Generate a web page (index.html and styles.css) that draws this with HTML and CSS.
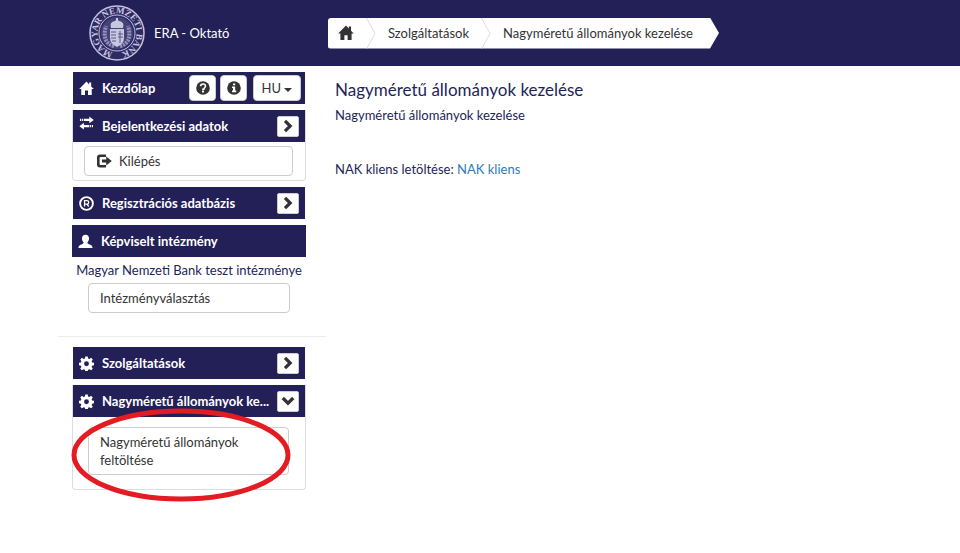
FILE: index.html
```html
<!DOCTYPE html>
<html lang="hu">
<head>
    <meta charset="UTF-8">
    <meta name="viewport" content="width=device-width, initial-scale=1.0">
    <title>ERA - Oktató</title>
    <link rel="stylesheet" href="styles.css">
</head>
<body>
    <!-- ikonok -->
    <svg class="icon-defs" aria-hidden="true">
        <symbol id="icon-home" viewBox="0 0 16 16">
            <path d="M8 0.6 0.2 8.6h2.2V15h4v-4.8h3.2V15h4V8.6h2.2L13 5.8V1.6h-2.2v2z"/>
        </symbol>
        <symbol id="icon-question" viewBox="0 0 14 14">
            <circle cx="7" cy="7" r="6.8"/>
            <path d="M4.6 5.3C4.6 3.8 5.6 3 7 3s2.5.9 2.5 2.1c0 1.5-1.7 1.7-1.7 3.1H6.1" fill="none" stroke="#fff" stroke-width="1.6"/>
            <path d="M6 9.6h2v1.8H6z" fill="#fff"/>
        </symbol>
        <symbol id="icon-info" viewBox="0 0 14 14">
            <circle cx="7" cy="7" r="6.8"/>
            <path d="M6 2.4h2.2v1.8H6zM5 5.4h3.2v4.2h1v1.6H5V9.6h1V7H5z" fill="#fff"/>
        </symbol>
        <symbol id="icon-transfer" viewBox="0 0 16 16">
            <path d="M5 3h6V.6l4.8 3.6L11 7.8V5.4H5zM3 3h1.2v2.4H3zM1 3h1.2v2.4H1zM11 9.6H5.2V7.2L.4 10.8l4.8 3.6V12H11zM11.8 9.6H13V12h-1.2zM13.8 9.6H15V12h-1.2z"/>
        </symbol>
        <symbol id="icon-logout" viewBox="0 0 16 16">
            <path d="M10 1.5H4Q1 1.5 1 4.5v7q0 3 3 3h6V12H4.400q-.8 0-.8-.8V4.800q0-.8.8-.8H10z"/>
            <path d="M6 6.600h4.200V3.500L15.800 8l-5.600 4.500V9.400H6z"/>
        </symbol>
        <symbol id="icon-registered" viewBox="0 0 16 16">
            <circle cx="8" cy="8" r="6.8" fill="none" stroke="currentColor" stroke-width="2"/>
            <path d="M5.900 11.200V5h2.500q2 0 2 1.800T8.400 8.600H5.900M8.400 8.600l2 2.600" fill="none" stroke="currentColor" stroke-width="1.4"/>
        </symbol>
        <symbol id="icon-user" viewBox="0 0 16 16">
            <path d="M8 .8c2.400 0 3.800 1.700 3.800 4.100 0 1.600-.7 3.100-1.700 4 0 1.300.4 1.500 1.600 2 2.400.9 3.700 1.500 3.900 3.900H.4c.2-2.400 1.500-3 3.900-3.900 1.200-.5 1.600-.7 1.600-2-1-.9-1.700-2.400-1.700-4C4.200 2.500 5.600.8 8 .8z"/>
        </symbol>
        <symbol id="icon-cog" viewBox="0 0 16 16">
            <path fill-rule="evenodd" d="M6.700.4h2.600l.4 2.200 1.300.5 1.900-1.200 1.800 1.800-1.200 1.900.5 1.300 2 .4v2.600l-2 .4-.5 1.300 1.200 1.900-1.800 1.800-1.900-1.200-1.300.5-.4 2H6.700l-.4-2-1.300-.5-1.900 1.200-1.800-1.800 1.200-1.900-.5-1.300-2-.4V7.300l2-.4.5-1.300-1.200-1.900 1.800-1.800L5 3.100l1.300-.5zM8 5.700a2.600 2.600 0 1 0 0 5.200 2.600 2.600 0 0 0 0-5.200z"/>
        </symbol>
        <symbol id="icon-right" viewBox="0 0 14 14">
            <path d="M4 1.8 9.2 7 4 12.200" fill="none" stroke="currentColor" stroke-width="3.2"/>
        </symbol>
        <symbol id="icon-down" viewBox="0 0 14 14">
            <path d="M1.800 4 7 9.200 12.200 4" fill="none" stroke="currentColor" stroke-width="3.2"/>
        </symbol>
    </svg>

    <header class="header">
        <div class="brand">
            <svg class="logo" viewBox="0 0 56 56" role="img" aria-label="Magyar Nemzeti Bank">
                <defs>
                    <path id="logoRing" d="M28 47.500a19.500 19.500 0 1 1 .1 0"/>
                </defs>
                <circle cx="28" cy="28" r="27" class="logo-disc"/>
                <circle cx="28" cy="28" r="18" class="logo-line"/>
                <circle cx="28" cy="28" r="16" class="logo-inner"/>
                <text class="logo-text"><textPath href="#logoRing" startOffset="50%">MAGYAR NEMZETI BANK</textPath></text>
                <!-- koszorú -->
                <path d="M25 41C16 39 14 31 17 21M31 41c9-2 11-10 8-20" class="logo-wreath"/>
                <!-- címer -->
                <path d="M21 24h14v9q0 6-7 9-7-3-7-9z" class="logo-shield"/>
                <path d="M22 27h5M22 30h5M22 33h5M23 36h4M31 26v12M29 29h5M29 32h5" class="logo-stripes"/>
                <path d="M22 23q-2-6 4-7l1-1v-2h2v2l1 1q6 1 4 7z" class="logo-crown"/>
            </svg>
            <span class="brand-name">ERA - Oktató</span>
        </div>
        <nav class="breadcrumb" aria-label="Navigáció">
            <a href="#" class="crumb crumb-home" aria-label="Kezdőlap"><svg class="icon"><use href="#icon-home"/></svg></a>
            <svg class="crumb-sep" viewBox="0 0 10 31"><path d="M.5 0 9 15.500.5 31"/></svg>
            <a href="#" class="crumb">Szolgáltatások</a>
            <svg class="crumb-sep" viewBox="0 0 10 31"><path d="M.5 0 9 15.500.5 31"/></svg>
            <a href="#" class="crumb crumb-last">Nagyméretű állományok kezelése</a>
        </nav>
    </header>

    <div class="container">
        <aside class="sidebar">
            <div class="panel">
                <div class="panel-heading">
                    <svg class="icon"><use href="#icon-home"/></svg>
                    <a href="#" class="panel-title">Kezdőlap</a>
                    <div class="tools">
                        <button class="btn btn-icon" aria-label="Súgó"><svg class="icon"><use href="#icon-question"/></svg></button>
                        <button class="btn btn-icon" aria-label="Információ"><svg class="icon"><use href="#icon-info"/></svg></button>
                        <button class="btn btn-lang">HU <span class="caret"></span></button>
                    </div>
                </div>
            </div>

            <div class="panel panel-bordered">
                <div class="panel-heading">
                    <svg class="icon icon-top"><use href="#icon-transfer"/></svg>
                    <a href="#" class="panel-title">Bejelentkezési adatok</a>
                    <button class="btn btn-toggle" aria-label="Megnyitás"><svg class="icon"><use href="#icon-right"/></svg></button>
                </div>
                <div class="panel-body panel-login">
                    <button class="btn btn-block"><svg class="icon"><use href="#icon-logout"/></svg>Kilépés</button>
                </div>
            </div>

            <div class="panel">
                <div class="panel-heading">
                    <svg class="icon"><use href="#icon-registered"/></svg>
                    <a href="#" class="panel-title">Regisztrációs adatbázis</a>
                    <button class="btn btn-toggle" aria-label="Megnyitás"><svg class="icon"><use href="#icon-right"/></svg></button>
                </div>
            </div>

            <div class="panel institution">
                <div class="panel-heading">
                    <svg class="icon"><use href="#icon-user"/></svg>
                    <span class="panel-title">Képviselt intézmény</span>
                </div>
                <p class="institution-name">Magyar Nemzeti Bank teszt intézménye</p>
                <button class="btn btn-block">Intézményválasztás</button>
            </div>

            <hr class="divider">

            <div class="panel">
                <div class="panel-heading">
                    <svg class="icon"><use href="#icon-cog"/></svg>
                    <a href="#" class="panel-title">Szolgáltatások</a>
                    <button class="btn btn-toggle" aria-label="Megnyitás"><svg class="icon"><use href="#icon-right"/></svg></button>
                </div>
            </div>

            <div class="panel panel-bordered">
                <div class="panel-heading">
                    <svg class="icon"><use href="#icon-cog"/></svg>
                    <a href="#" class="panel-title">Nagyméretű állományok ke...</a>
                    <button class="btn btn-toggle" aria-label="Bezárás"><svg class="icon"><use href="#icon-down"/></svg></button>
                </div>
                <div class="panel-body panel-files">
                    <button class="btn btn-block">Nagyméretű állományok feltöltése</button>
                    <svg class="marker" viewBox="0 0 220 94" aria-hidden="true"><ellipse cx="110" cy="47" rx="107" ry="44"/></svg>
                </div>
            </div>
        </aside>

        <main class="content">
            <h1>Nagyméretű állományok kezelése</h1>
            <p>Nagyméretű állományok kezelése</p>
            <p class="download">NAK kliens letöltése: <a href="#">NAK kliens</a></p>
        </main>
    </div>
</body>
</html>
```
FILE: styles.css
```css
* {
    box-sizing: border-box;
    margin: 0;
    padding: 0;
}

body {
    min-height: 100vh;
    font-family: "Trebuchet MS", Lato, "Open Sans", sans-serif;
    font-size: 13px;
    line-height: 18px;
    color: #231f57;
    background-color: #fff;
}

a {
    color: #337ab7;
    text-decoration: none;
}

.icon-defs {
    display: none;
}

.icon {
    width: 14px;
    height: 14px;
    flex: none;
    fill: currentColor;
}

/* fejléc */
.header {
    display: flex;
    align-items: center;
    height: 66px;
    background-color: #231f57;
}

.brand {
    display: flex;
    align-items: center;
    width: 328px;
    padding-left: 89px;
    color: #fff;
}

.logo {
    width: 56px;
    height: 56px;
    margin-right: 9px;
}

.logo-disc {
    fill: #2e2a63;
    stroke: #c3c1dc;
    stroke-width: 1.5;
}

.logo-line {
    fill: none;
    stroke: #c3c1dc;
    stroke-width: 1;
}

.logo-inner {
    fill: #45427a;
}

.logo-text {
    font-family: "Liberation Serif", serif;
    font-size: 9px;
    font-weight: bold;
    fill: #c9c7e0;
    text-anchor: middle;
}

.logo-wreath {
    fill: none;
    stroke: #9492bb;
    stroke-width: 4;
    stroke-dasharray: 2 1;
}

.logo-shield,
.logo-crown {
    fill: #c9c7e0;
}

.logo-stripes {
    fill: none;
    stroke: #5a5790;
    stroke-width: 1;
}

.breadcrumb {
    display: flex;
    height: 31px;
    background-color: #fff;
    border-radius: 3px 0 0 3px;
    clip-path: polygon(0 0, calc(100% - 9px) 0, 100% 50%, calc(100% - 9px) 100%, 0 100%);
}

.crumb {
    display: flex;
    align-items: center;
    padding: 0 12px;
    color: #333;
}

.crumb-home {
    padding: 0 12px 0 10px;
}

.crumb-home .icon {
    width: 16px;
    height: 16px;
}

.crumb-last {
    padding-right: 26px;
}

.crumb-sep {
    width: 10px;
    height: 31px;
    flex: none;
    fill: none;
    stroke: #ddd;
}

/* oldalsáv */
.container {
    display: grid;
    grid-template-columns: 268px 1fr;
    padding-left: 58px;
}

.sidebar {
    padding: 6px 0 20px;
}

.panel {
    margin: 0 20px 6px 14px;
    border: 0 solid transparent;
    border-width: 0 1px;
}

.panel-bordered {
    border-width: 0 1px 1px;
    border-color: #ddd;
    border-radius: 0 0 4px 4px;
}

.panel-heading {
    display: flex;
    align-items: center;
    height: 32px;
    padding: 0 6px;
    background-color: #231f57;
    color: #fff;
}

.panel-heading > .icon {
    width: 15px;
    height: 15px;
}

.panel-title {
    flex: 1;
    min-width: 0;
    margin: 0 4px 0 8px;
    overflow: hidden;
    text-overflow: ellipsis;
    white-space: nowrap;
    font-weight: bold;
    color: #fff;
}

.icon-top {
    align-self: flex-start;
    margin-top: 6px;
}

.tools {
    display: flex;
    gap: 4px;
}

.btn {
    font: inherit;
    color: #333;
    background-color: #fff;
    border: 1px solid #ccc;
    border-radius: 4px;
    cursor: pointer;
}

.btn-icon,
.btn-toggle {
    display: flex;
    align-items: center;
    justify-content: center;
    flex: none;
}

.btn-icon {
    width: 27px;
    height: 26px;
}

.btn-toggle {
    width: 22px;
    height: 21px;
    border-radius: 2px;
}

.btn-lang {
    width: 48px;
    height: 26px;
    margin: 0 -2px 0 2px;
}

.caret {
    display: inline-block;
    vertical-align: middle;
    border-top: 4px solid #333;
    border-left: 4px solid transparent;
    border-right: 4px solid transparent;
}

.btn-block {
    display: flex;
    align-items: center;
    width: 100%;
    min-height: 30px;
    padding: 5px 11px;
    text-align: left;
}

.btn-block .icon {
    width: 16px;
    height: 16px;
    margin-right: 7px;
}

.panel-login {
    padding: 4px 12px 4px 11px;
}

.panel-files {
    position: relative;
    padding: 10px 16px 14px 15px;
}

.panel-files .btn-block {
    min-height: 48px;
    padding-right: 30px;
}

.institution {
    border-width: 0;
}

.institution-name {
    padding: 4px 0;
    text-align: center;
}

.institution .btn-block {
    width: auto;
    min-width: 202px;
    margin: 0 16px;
}

.divider {
    margin: 23px 0 10px;
    border: 0;
    border-top: 1px solid #eee;
}

/* kiemelés a feltöltés gomb körül */
.marker {
    position: absolute;
    top: -9px;
    left: -2px;
    width: 220px;
    height: 94px;
    fill: none;
    stroke: #e31b23;
    stroke-width: 5;
    pointer-events: none;
}

/* tartalom */
.content {
    padding: 14px 9px;
}

.content h1 {
    margin-bottom: 6px;
    font-size: 17px;
    font-weight: normal;
    line-height: 20px;
}

.download {
    margin-top: 36px;
}
```
